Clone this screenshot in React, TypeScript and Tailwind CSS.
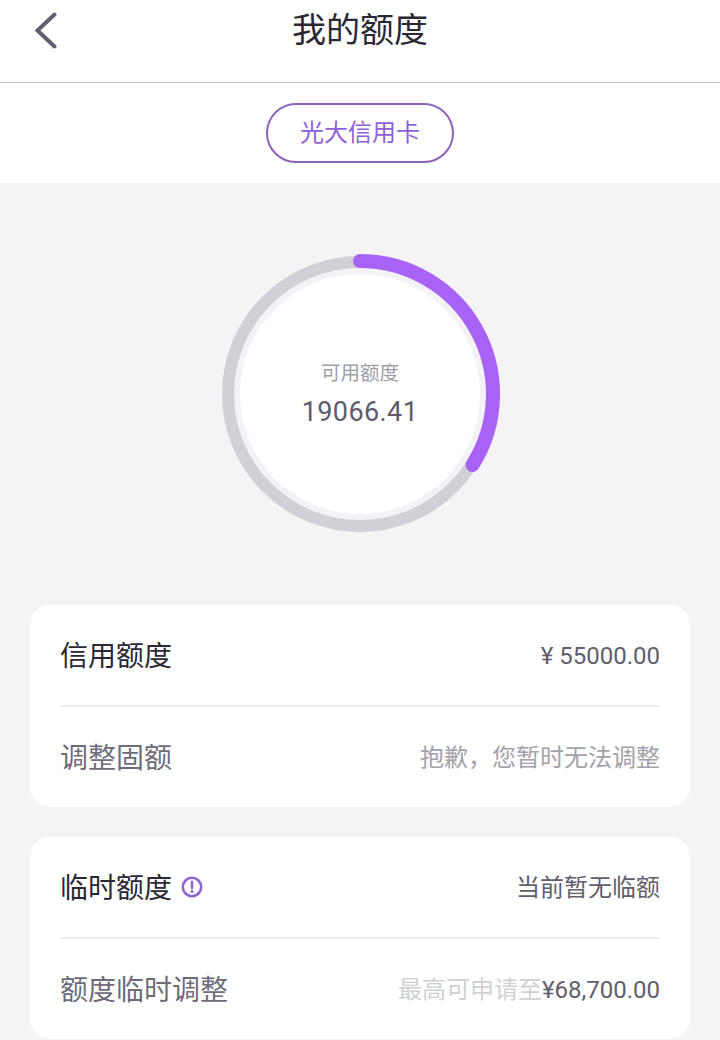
const font = { fontFamily: '"Roboto", "Noto Sans CJK SC", sans-serif' };

function Ring() {
  const cx = 150, cy = 150;
  const r = 133;
  const ex = cx + 112.5;
  const ey = cy + 71;
  return (
    <svg width="300" height="300" viewBox="0 0 300 300" className="block">
      <circle cx={cx} cy={cy} r="132" fill="#f3f2f7" stroke="#d1d0d6" strokeWidth="12" />
      <circle cx={cx} cy={cy} r="120" fill="#ffffff" />
      <path
        d={`M ${cx} ${cy - r} A ${r} ${r} 0 0 1 ${ex} ${ey}`}
        fill="none"
        stroke="#a862f5"
        strokeWidth="14"
        strokeLinecap="round"
      />
    </svg>
  );
}

function Row({ left, right, leftClass, line }: { left: React.ReactNode; right: React.ReactNode; leftClass: string; line?: boolean }) {
  return (
    <div className={`mx-[30px] flex items-center justify-between ${line ? 'h-[102px] border-b-2 border-[#eeeef0] pt-[2px]' : 'h-[100px] pt-[1px]'}`}>
      <div className={`flex items-center pt-[2px] text-[28px] leading-none ${leftClass}`}>{left}</div>
      <div className="flex items-center text-[24px] leading-none">{right}</div>
    </div>
  );
}

export default function App() {
  return (
    <div style={font} className="relative h-[1040px] w-[720px] overflow-hidden bg-[#f4f4f7]">
      <header className="relative flex h-[83px] items-center justify-center border-b border-[#bdbdbf] bg-white pb-[23px]">
        <svg width="24" height="38" viewBox="0 0 24 38" className="absolute left-[34px] top-[12px]">
          <path d="M20.5 2.5 L3.5 18.5 L20.5 34.5" fill="none" stroke="#635f70" strokeWidth="4" strokeLinecap="round" strokeLinejoin="miter" />
        </svg>
        <h1 className="text-[34px] font-normal leading-none text-[#2b2833]">我的额度</h1>
      </header>

      <div className="flex h-[100px] items-center justify-center bg-white">
        <div className="flex h-[60px] w-[188px] items-center justify-center rounded-full border-2 border-[#8e63b8] text-[24px] leading-none text-[#8f5fd6]">
          光大信用卡
        </div>
      </div>

      <div className="flex h-[422px] justify-center pt-[61px]">
        <div className="relative h-[300px] w-[300px]">
          <Ring />
          <div className="absolute inset-0 flex flex-col items-center justify-center pt-[2px]">
            <div className="text-[19.5px] leading-none text-[#a09ea8]">可用额度</div>
            <div className="mt-[15px] text-[27px] leading-none tracking-[0.4px] text-[#5f5b69]">19066.41</div>
          </div>
        </div>
      </div>

      <div className="flex flex-col gap-[30px] px-[30px]">
        <section className="rounded-[20px] bg-white">
          <Row line left="信用额度" leftClass="text-[#2b2833]" right={<span className="text-[#625e6c]">¥ 55000.00</span>} />
          <Row left="调整固额" leftClass="text-[#6f6b79]" right={<span className="text-[#a3a1aa]">抱歉，您暂时无法调整</span>} />
        </section>
        <section className="rounded-[20px] bg-white">
          <Row
            line
            left={
              <>
                临时额度
                <svg width="22" height="22" viewBox="0 0 22 22" className="ml-[9px] -mt-[4px]">
                  <circle cx="11" cy="11" r="9.2" fill="none" stroke="#8f63d2" strokeWidth="2.5" />
                  <path d="M11 5.8 V12" stroke="#8f63d2" strokeWidth="2.6" strokeLinecap="round" />
                  <circle cx="11" cy="15.6" r="1.5" fill="#8f63d2" />
                </svg>
              </>
            }
            leftClass="text-[#2b2833]"
            right={<span className="text-[#625e6c]">当前暂无临额</span>}
          />
          <Row
            left="额度临时调整"
            leftClass="text-[#6f6b79]"
            right={
              <span>
                <span className="text-[#d0d0d4]">最高可申请至</span>
                <span className="text-[#625e6c]">¥68,700.00</span>
              </span>
            }
          />
        </section>
      </div>
    </div>
  );
}
